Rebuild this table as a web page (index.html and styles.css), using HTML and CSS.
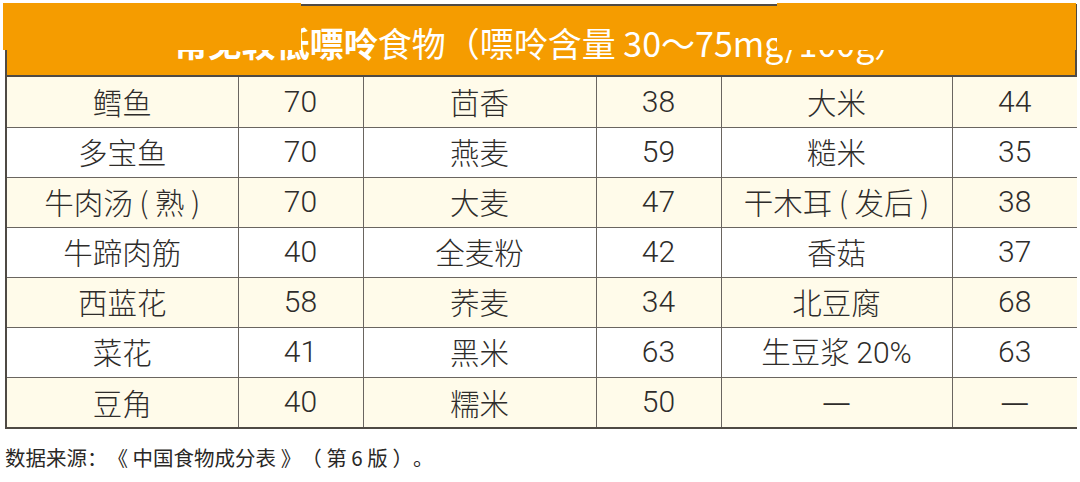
FILE: index.html
```html
<!DOCTYPE html>
<html lang="zh">
<head>
<meta charset="utf-8">
<title>常见较低嘌呤食物</title>
<link rel="stylesheet" href="styles.css">
</head>
<body>
<div class="page">
  <div class="sheet">
    <div class="title"><b>常见较低嘌呤</b>食物（嘌呤含量 30～75mg/100g）</div>
    <table class="grid">
      <colgroup>
        <col class="c-name"><col class="c-num"><col class="c-name2"><col class="c-num"><col class="c-name"><col class="c-num">
      </colgroup>
      <tbody>
        <tr class="odd"><td>鳕鱼</td><td class="n">70</td><td>茴香</td><td class="n">38</td><td>大米</td><td class="n">44</td></tr>
        <tr><td>多宝鱼</td><td class="n">70</td><td>燕麦</td><td class="n">59</td><td>糙米</td><td class="n">35</td></tr>
        <tr class="odd"><td>牛肉汤 ( 熟 )</td><td class="n">70</td><td>大麦</td><td class="n">47</td><td>干木耳 ( 发后 )</td><td class="n">38</td></tr>
        <tr><td>牛蹄肉筋</td><td class="n">40</td><td>全麦粉</td><td class="n">42</td><td>香菇</td><td class="n">37</td></tr>
        <tr class="odd"><td>西蓝花</td><td class="n">58</td><td>荞麦</td><td class="n">34</td><td>北豆腐</td><td class="n">68</td></tr>
        <tr><td>菜花</td><td class="n">41</td><td>黑米</td><td class="n">63</td><td>生豆浆 <span class="num">20%</span></td><td class="n">63</td></tr>
        <tr class="odd"><td>豆角</td><td class="n">40</td><td>糯米</td><td class="n">50</td><td class="dash">—</td><td class="dash">—</td></tr>
      </tbody>
    </table>
  </div>
  <div class="mask mask-left"></div>
  <div class="mask mask-right"></div>
  <p class="source">数据来源：《 中国食物成分表 》（ 第 6 版 ）。</p>
</div>
</body>
</html>
```

FILE: styles.css
```css
html, body {
  margin: 0;
  padding: 0;
  background: #ffffff;
}

.page {
  position: relative;
  width: 1080px;
  height: 482px;
  padding: 4px 0 0 5px;
  box-sizing: border-box;
}

.sheet {
  width: 1072px;
  border: 2px solid #4f4a44;
  box-sizing: border-box;
}

.title {
  height: 71px;
  box-sizing: border-box;
  padding-top: 6px;
  background: #f59c00;
  border-bottom: 2px solid #4f4a44;
  color: #ffffff;
  font-family: "Noto Sans CJK SC", "Noto Sans", sans-serif;
  font-size: 34px;
  font-weight: 400;
  line-height: 62px;
  text-align: center;
  white-space: nowrap;
  text-spacing-trim: space-all;
}

.title b {
  font-weight: 700;
}

.grid {
  width: 100%;
  border-collapse: collapse;
  table-layout: fixed;
}

.c-name { width: 231px; }
.c-name2 { width: 233px; }
.c-num { width: 125px; }

.grid tr {
  height: 50px;
  background: #ffffff;
}

.grid tr.odd {
  background: #fffbea;
}

.grid td {
  padding: 0;
  height: 48px;
  border: 1.5px solid #6a6560;
  text-align: center;
  vertical-align: middle;
  color: #2e2c2a;
  font-family: "Noto Sans CJK SC", sans-serif;
  font-weight: 300;
  font-size: 29.5px;
  line-height: 1;
}

.grid tr:first-child td { border-top: none; }
.grid tr:last-child td { border-bottom: none; }
.grid td:first-child { border-left: none; }
.grid td:last-child { border-right: none; }

.grid td.n,
.grid .num {
  font-family: "Roboto", "Liberation Sans", sans-serif;
  font-weight: 300;
  font-size: 30px;
}

.grid td.dash {
  font-family: "Liberation Sans", sans-serif;
  font-size: 26px;
}

.mask {
  position: absolute;
  top: 3px;
  height: 47px;
  background: #f59c00;
}

.mask-left {
  left: 3px;
  width: 298px;
}

.mask-right {
  left: 777px;
  width: 299px;
}

.source {
  margin: 14px 0 0 0;
  color: #2a2826;
  font-family: "Noto Sans CJK SC", sans-serif;
  font-size: 20.5px;
  line-height: 28px;
  white-space: nowrap;
  text-spacing-trim: space-all;
}
```
